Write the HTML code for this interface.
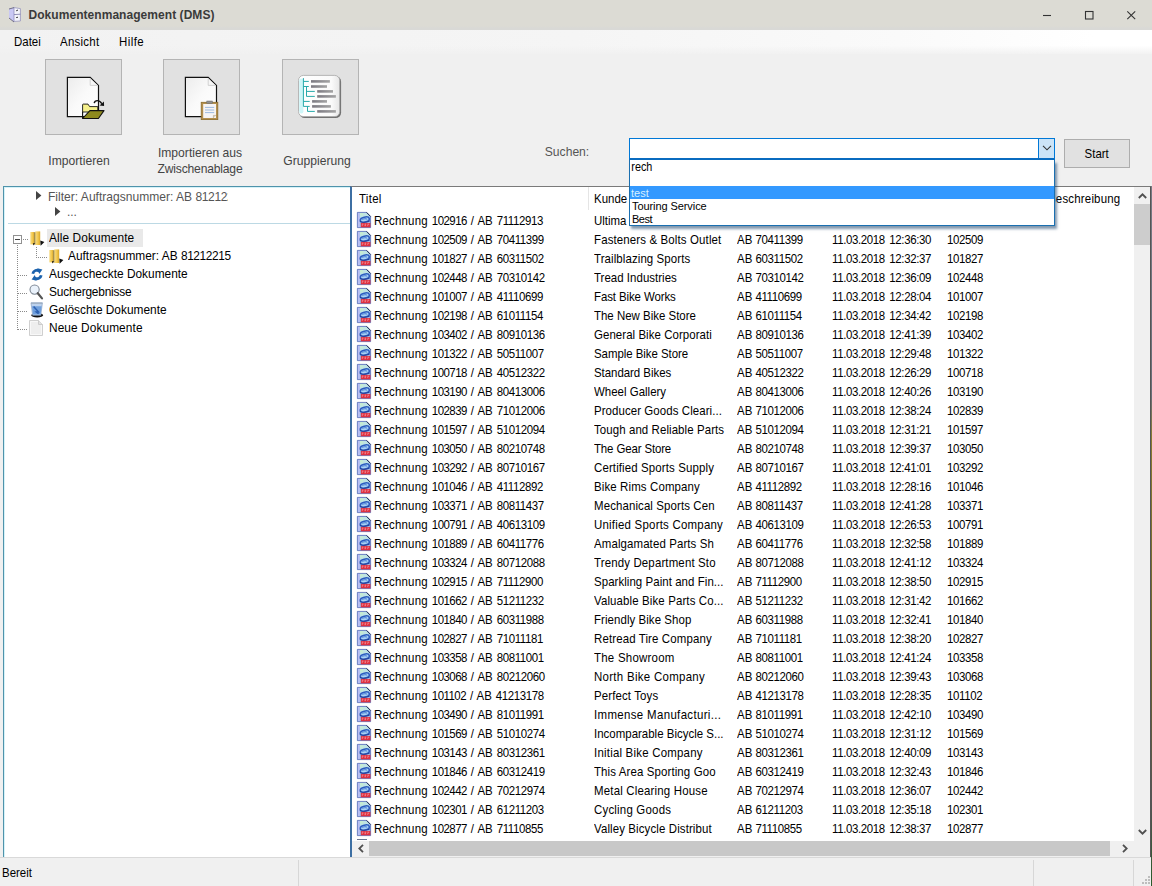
<!DOCTYPE html>
<html lang="de">
<head>
<meta charset="utf-8">
<title>Dokumentenmanagement (DMS)</title>
<style>
*{box-sizing:border-box;margin:0;padding:0}
html,body{width:1152px;height:886px;overflow:hidden;background:#f0f0f0}
body{font-family:"Liberation Sans",sans-serif;font-size:12px;color:#000;position:relative}
.abs,.r,.c,.t,.lbl,.mi{position:absolute;white-space:nowrap}
svg{position:absolute;overflow:visible}
/* title bar */
#title{left:0;top:0;width:1152px;height:30px;background:linear-gradient(180deg,#dcdbd4 0,#dcdbd4 86%,#d9d9d6 94%,#d9d9d6 100%)}
#title .tt{left:28.5px;top:7px;font-weight:bold;font-size:12px;line-height:16px;color:#3a3a3a;letter-spacing:.05px}
/* menu */
#menu{left:0;top:30px;width:1152px;height:24px;background:linear-gradient(180deg,rgba(240,240,240,0) 65%,rgba(240,240,240,.85) 100%),linear-gradient(90deg,#f2f2f2 0,#f5f5f5 50%,#fafafa 78%,#fff 95%)}
.mi{top:4px;line-height:16px}
/* toolbar */
.tb{width:77px;height:76px;top:59px;background:#e1e1e1;border:1px solid #b4b4b4}
.lbl{color:#444;line-height:14.5px;text-align:center;transform:translateX(-50%) scale(1.01,1.05)}
#combo{left:629px;top:138px;width:426px;height:22px;background:#fff;border:1px solid #0078d7;border-bottom:2px solid #0a6cc0}
#cbtn{left:1038px;top:139px;width:16px;height:19px;background:#cce4f7;border-left:1px solid #0078d7}
#drop{left:629px;top:160px;width:426px;height:66px;background:#fff;border:1px solid #1a6fb0;border-top:none;box-shadow:2px 3px 2.5px rgba(30,70,110,.55)}
#drop div{position:absolute;left:0;width:424px;height:13px;line-height:15px;font-size:11px;padding-left:2px}
#start{left:1064px;top:139px;width:66px;height:29px;background:#e1e1e1;border:1px solid #adadad;text-align:center;line-height:29px}
/* panels */
#left{left:3px;top:186px;width:347px;height:671px;background:#fff;border-left:1px solid #4f93ab;border-top:1px solid #4f93ab}
#right{left:350px;top:186px;width:801px;height:671px;background:#fff;border-left:2px solid #3d6fa3;border-top:1px solid #7a7a7a;border-right:1px solid #555}
.t{line-height:18px}
.c,.t,.h,.mi,.sx{transform:scale(.955,1.05);transform-origin:0 60%}
.t{transform:scale(.99,1.05)}
.t b,.c b{font-weight:normal;letter-spacing:-.39px}
.c i{font-style:normal;letter-spacing:.2px}
.c1{word-spacing:.85px}
.c4{word-spacing:1.4px}
.c b.n6{letter-spacing:-.55px}
.dot{position:absolute;background-image:linear-gradient(90deg,#8a8a8a 50%,transparent 50%);background-size:2px 1px;height:1px}
.vdot{position:absolute;background-image:linear-gradient(180deg,#8a8a8a 50%,transparent 50%);background-size:1px 2px;width:1px}
/* list */
.r{left:0;width:1134px;height:19px;line-height:19px}
.c{top:1px}
.c1{left:374.4px}.c2{left:594px}.c3{left:737px}.c4{left:832px}.c5{left:947px}
.pi{left:357px;top:1px;width:14px;height:16px}
.h{top:191px;line-height:16px}
/* scrollbars */
#vs{left:1134px;top:187px;width:16px;height:654px;background:#f0f0f0}
#hs{left:352px;top:841px;width:798px;height:16px;background:#f0f0f0}
/* status */
#status{left:0;top:857px;width:1151px;height:29px;background:#f0f0f0;border-top:1px solid #d9d9d9}
.sep{position:absolute;top:2px;width:1px;height:27px;background:#d7d7d7}
</style>
</head>
<body>
<svg width="0" height="0" style="position:absolute">
<defs>
<linearGradient id="pg" x1="0" y1="0" x2="1" y2="1"><stop offset="0" stop-color="#ececec"/><stop offset=".5" stop-color="#fafafa"/><stop offset="1" stop-color="#fff"/></linearGradient>
<linearGradient id="fy" x1="0" y1="0" x2="1" y2="0"><stop offset="0" stop-color="#f7dc86"/><stop offset=".55" stop-color="#f3c94e"/><stop offset="1" stop-color="#d9a62a"/></linearGradient>
<g id="pdf">
<path d="M0.4 0.4H9.6L13.6 4.5V15.6H0.4Z" fill="#9fc0ee" stroke="#4f66b2" stroke-width=".8"/>
<path d="M0.9 0.9H2.7V15.1H0.9Z" fill="#b9bdf2"/>
<path d="M2.9 1H9.2L12 3.9V5.4H2.9Z" fill="#bfe4e2"/>
<path d="M3 1.2H6V3.4H3Z" fill="#c6ecd0"/>
<ellipse cx="7.8" cy="7.6" rx="4.6" ry="2.5" transform="rotate(-14 7.8 7.6)" fill="#a9d2f4" stroke="#2c5cc0" stroke-width="1.5"/>
<path d="M2.8 9.4C5 10.6 8.4 10.8 12.8 9" fill="none" stroke="#1f3f98" stroke-width="1"/>
<path d="M5.4 7.6C6.6 6.6 8.8 6.4 10.2 7.2" fill="none" stroke="#3a70d0" stroke-width=".9"/>
<path d="M9.6 0.4L13.6 4.5" stroke="#20304e" stroke-width="1"/>
<rect x="3.8" y="10.9" width="9.6" height="4.4" fill="#de2f3f"/>
<path d="M4.8 12.2H6.4M7.6 12.2H9.2M10.4 12.2H12.2M4.8 13.6H5.6M7.6 13.6H8.8M10.4 13.6H11.2" stroke="#f5a0a8" stroke-width=".9"/>
</g>
<g id="fold">
<path d="M0.3 1H4.4V13.4H0.3Z" fill="url(#fy)"/>
<path d="M5.2 0.4H10.2V14H5.2Z" fill="url(#fy)"/>
<path d="M4.3 1.2H5.3V13.6H4.3Z" fill="#8a7320"/>
<path d="M2.9 12.2H5.1L3.4 14.6Z" fill="#111"/>
<path d="M10.3 9.4L14.4 11L10.6 14.8Z" fill="#111"/>
</g>
</defs>
</svg>

<!-- ===== title bar ===== -->
<div id="title" class="abs">
<svg style="left:8px;top:7px" width="14" height="17" viewBox="0 0 14 17"><path d="M1 2L6 0.6V14.4L1 11Z" fill="#c9c8f4"/><path d="M6 0.6L12.4 1.6V14L6 14.4Z" fill="#f4f4fb" stroke="#8a88b4" stroke-width=".7"/><path d="M1 2L6 0.6M1 11L6 15" stroke="#55546e" stroke-width=".8"/><path d="M6 7.6L12.4 7.2" stroke="#7a78a8" stroke-width=".8"/><path d="M8.2 3.8L10 3M8.2 10.6L10 10.2" stroke="#333" stroke-width="1"/></svg>
<div class="abs tt">Dokumentenmanagement (DMS)</div>
<svg style="left:1042px;top:10px" width="100" height="12" viewBox="0 0 100 12" fill="none" stroke="#333" stroke-width="1.1"><path d="M1 5.5H9"/><rect x="43.5" y="1.5" width="7.5" height="7.5"/><path d="M85.3 1.3L93.2 9.2M93.2 1.3L85.3 9.2"/></svg>
</div>

<!-- ===== menu ===== -->
<div id="menu" class="abs">
<div class="mi" style="left:14px">Datei</div>
<div class="mi" style="left:60px;letter-spacing:.28px">Ansicht</div>
<div class="mi" style="left:119px;letter-spacing:.45px">Hilfe</div>
</div>

<!-- ===== toolbar ===== -->
<div class="abs tb" style="left:45px"></div>
<div class="abs tb" style="left:163px"></div>
<div class="abs tb" style="left:282px"></div>

<!-- import icon -->
<svg style="left:66px;top:76px" width="40" height="44" viewBox="0 0 40 44">
<path d="M1.4 1.4H24.2L32.5 9.4V40.6H1.4Z" fill="url(#pg)" stroke="#111" stroke-width="1.2"/>
<path d="M24.2 2.4V9.4H31.6" fill="#f6f6f6" stroke="#cdcdcd" stroke-width=".9"/>
<path d="M16.6 42.4V28.7Q16.6 28.1 17.2 28.1H22L23.6 30.6H31.8V36H16.6Z" fill="#f5f08c" stroke="#111" stroke-width=".9"/>
<path d="M16.6 42.5L23.9 34.6H38L32.4 42.5Z" fill="#8e8a1e" stroke="#111" stroke-width="1.1" stroke-linejoin="round"/>
<path d="M28.2 27.2C28.8 24 33.6 23.4 35.8 27.8" fill="none" stroke="#111" stroke-width="1.4"/>
<path d="M33.6 29.6L38.1 29.9L37.9 25.6Z" fill="#111"/>
</svg>
<!-- clipboard icon -->
<svg style="left:184px;top:76px" width="40" height="44" viewBox="0 0 40 44">
<path d="M1.4 1.4H24.2L32.5 9.4V40.6H1.4Z" fill="url(#pg)" stroke="#111" stroke-width="1.2"/>
<path d="M24.2 2.4V9.4H31.6" fill="#f6f6f6" stroke="#cdcdcd" stroke-width=".9"/>
<rect x="17.2" y="26.3" width="16.6" height="17.3" fill="#b4904e" stroke="#8a6c2c" stroke-width=".8"/>
<rect x="19.2" y="28" width="12.8" height="14" fill="#f6f4f4"/>
<path d="M29.4 42V39.4H32" fill="#d8d0c4" stroke="#a89878" stroke-width=".5"/>
<rect x="22.8" y="25" width="5.6" height="2.6" fill="#8f8f8f" stroke="#6a6a6a" stroke-width=".5"/>
<path d="M21 31.4H30.2M21 34H30.2M21 36.6H30.2" stroke="#9dbbe0" stroke-width="1"/>
</svg>
<!-- grouping icon -->
<svg style="left:298px;top:75px" width="44" height="44" viewBox="0 0 44 44">
<defs><linearGradient id="bar" x1="0" y1="0" x2="1" y2="0"><stop offset="0" stop-color="#7c7a82"/><stop offset="1" stop-color="#a4a4a4"/></linearGradient>
<linearGradient id="gi" x1="0" y1="0" x2="1" y2="0"><stop offset="0" stop-color="#fff"/><stop offset=".8" stop-color="#fafafa"/><stop offset="1" stop-color="#e6e6e6"/></linearGradient></defs>
<rect x="1.3" y="1.2" width="41.8" height="41.8" rx="5.5" fill="#6e6e6e"/>
<rect x=".5" y=".4" width="41.2" height="41.2" rx="5" fill="url(#gi)" stroke="#a8a8a8" stroke-width=".8"/>
<rect x="1.2" y="3.4" width="4.2" height="35" rx="2" fill="#cff6f8"/>
<path d="M5.4 3.1V31.4H11.7M5.4 6.4H10.8M5.4 11.5H10.8M8.5 11.5V21.4H16.8M8.5 16.4H16.8M5.4 26.4H11.7M9.5 31.4V36.4H16.8" fill="none" stroke="#27a9ab" stroke-width="1"/>
<g fill="url(#bar)"><rect x="13" y="5.1" width="18.9" height="2.6"/><rect x="13" y="10.2" width="16" height="2.6"/><rect x="19.2" y="15.1" width="15.8" height="2.6"/><rect x="19.2" y="20.1" width="18.7" height="2.6"/><rect x="14.1" y="25.1" width="14.9" height="2.6"/><rect x="14.1" y="30.1" width="18.8" height="2.6"/><rect x="19.2" y="35.1" width="18.7" height="2.6"/></g>
</svg>

<div class="lbl" style="left:79px;top:154px">Importieren</div>
<div class="lbl" style="left:200px;top:146px">Importieren aus<br><span style="letter-spacing:-.19px">Zwischenablage</span></div>
<div class="lbl" style="left:317px;top:154px">Gruppierung</div>
<div class="lbl" style="left:567px;top:145px;color:#555">Suchen:</div>

<div id="combo" class="abs"></div>
<div id="cbtn" class="abs"><svg style="left:3px;top:6px" width="10" height="6" viewBox="0 0 10 6"><path d="M1 .8L5 4.8L9 .8" fill="none" stroke="#333" stroke-width="1.1"/></svg></div>
<div id="start" class="abs"><span class="sx" style="display:inline-block;transform-origin:50% 60%">Start</span></div>

<!-- ===== left panel ===== -->
<div id="left" class="abs"></div>
<div class="abs" style="left:4px;top:187px;width:346px;height:1px;background:#d6f2f8"></div>
<div class="abs" style="left:4px;top:187px;width:1px;height:670px;background:#d6f2f8"></div>
<div class="abs" style="left:8px;top:223px;width:342px;height:1px;background:#bcd9e4"></div>
<svg style="left:36px;top:191px" width="6" height="9" viewBox="0 0 6 9"><path d="M0 0L5.4 4.5L0 9Z" fill="#444"/></svg>
<svg style="left:55px;top:207px" width="6" height="9" viewBox="0 0 6 9"><path d="M0 0L5.4 4.5L0 9Z" fill="#444"/></svg>
<div class="t" style="left:48px;top:188px;color:#555;width:178.5px;overflow:hidden;transform:scale(1.005,1.05)">Filter: Auftragsnummer: AB <b>812122</b></div>
<div class="t" style="left:67px;top:203px;color:#555">...</div>

<!-- tree -->
<div class="abs" style="left:47px;top:229px;width:96px;height:18px;background:#e9e9e9"></div>
<div class="vdot" style="left:17px;top:245px;height:85px"></div>
<div class="dot" style="left:23px;top:239px;width:6px"></div>
<div class="vdot" style="left:36px;top:247px;height:11px"></div>
<div class="dot" style="left:36px;top:257px;width:11px"></div>
<div class="dot" style="left:18px;top:275px;width:10px"></div>
<div class="dot" style="left:18px;top:293px;width:10px"></div>
<div class="dot" style="left:18px;top:311px;width:10px"></div>
<div class="dot" style="left:18px;top:329px;width:10px"></div>
<div class="abs" style="left:13px;top:235px;width:9px;height:9px;border:1px solid #919191;background:#fff"></div>
<div class="abs" style="left:15px;top:239px;width:5px;height:1px;background:#444"></div>

<svg style="left:29.5px;top:231px" width="15" height="15" viewBox="0 0 15 15"><use href="#fold"/></svg>
<svg style="left:48.5px;top:249px" width="15" height="15" viewBox="0 0 15 15"><use href="#fold"/></svg>
<!-- refresh -->
<svg style="left:30.5px;top:268px" width="12" height="13" viewBox="0 0 12 13"><path d="M1.8 5.8A4.2 4.2 0 0 1 8.6 3.2" fill="none" stroke="#1c62ad" stroke-width="2.8"/><path d="M6.4 0.2L11.4 1.6L8.2 6Z" fill="#1c62ad"/><path d="M10.2 7.2A4.2 4.2 0 0 1 3.4 9.8" fill="none" stroke="#1c62ad" stroke-width="2.8"/><path d="M5.6 12.8L0.6 11.4L3.8 7Z" fill="#1c62ad"/></svg>
<!-- magnifier -->
<svg style="left:29px;top:284px" width="15" height="16" viewBox="0 0 15 16"><circle cx="5.6" cy="5.6" r="4.6" fill="#eaf2fb" stroke="#7d8794" stroke-width="1.1"/><path d="M8.8 9.2L13 14.4" stroke="#555" stroke-width="2.2" stroke-linecap="round"/></svg>
<!-- trash -->
<svg style="left:29.5px;top:302px" width="14" height="16" viewBox="0 0 14 16"><ellipse cx="7.2" cy="13.2" rx="6" ry="2.2" fill="#111"/><path d="M1 0.8H12.4L10.8 13.2H2.6Z" fill="#bcd2ee" stroke="#8aa2c4" stroke-width=".7"/><path d="M2 4.2H11.6L10.6 12.6H3Z" fill="#6f9fdc"/><path d="M3.6 4.6L8.4 9.8L6.4 10L8.6 11.6" fill="none" stroke="#2b5fb0" stroke-width="1.5"/><path d="M1 1.2H12.4" stroke="#9aa8b8" stroke-width="1"/></svg>
<!-- page -->
<svg style="left:29px;top:320px" width="14" height="16" viewBox="0 0 14 16"><path d="M0.5 0.5H9.5L13.5 4.5V15.5H0.5Z" fill="#eeeeee" stroke="#cfcfcf" stroke-width="1"/><path d="M1.5 1.5H9L12.5 5V14.5H1.5Z" fill="none" stroke="#f8f8f8" stroke-width="1"/><path d="M9.5 0.5V4.5H13.5" fill="#e2e2e2" stroke="#c4c4c4" stroke-width=".8"/></svg>

<div class="t" style="left:49px;top:229px;letter-spacing:.1px">Alle Dokumente</div>
<div class="t" style="left:68px;top:247px">Auftragsnummer: AB <b>81212215</b></div>
<div class="t" style="left:49px;top:265px">Ausgecheckte Dokumente</div>
<div class="t" style="left:49px;top:283px;letter-spacing:-.2px">Suchergebnisse</div>
<div class="t" style="left:49px;top:301px">Gelöschte Dokumente</div>
<div class="t" style="left:49px;top:319px;letter-spacing:.08px">Neue Dokumente</div>

<!-- ===== right panel ===== -->
<div id="right" class="abs"></div>
<div class="abs" style="left:588px;top:187px;width:1px;height:23px;background:#e5e5e5"></div>
<div class="abs h" style="left:359px;letter-spacing:.3px">Titel</div>
<div class="abs h" style="left:594px">Kunde</div>
<div class="abs h" style="left:1047.6px;letter-spacing:.2px">Beschreibung</div>
<div class="r" style="top:211px"><svg class="pi" viewBox="0 0 14 16"><use href="#pdf"/></svg><span class="c c1"><i>Rechnung</i> <b class="n6">102916</b> / AB <b>71112913</b></span><span class="c c2">Ultima</span></div>
<div class="r" style="top:230px"><svg class="pi" viewBox="0 0 14 16"><use href="#pdf"/></svg><span class="c c1"><i>Rechnung</i> <b class="n6">102509</b> / AB <b>70411399</b></span><span class="c c2" style="letter-spacing:0.14px">Fasteners &amp; Bolts Outlet</span><span class="c c3">AB <b>70411399</b></span><span class="c c4"><b>11.03.2018</b> <b>12:36:30</b></span><span class="c c5"><b>102509</b></span></div>
<div class="r" style="top:249px"><svg class="pi" viewBox="0 0 14 16"><use href="#pdf"/></svg><span class="c c1"><i>Rechnung</i> <b class="n6">101827</b> / AB <b>60311502</b></span><span class="c c2" style="letter-spacing:0.1px">Trailblazing Sports</span><span class="c c3">AB <b>60311502</b></span><span class="c c4"><b>11.03.2018</b> <b>12:32:37</b></span><span class="c c5"><b>101827</b></span></div>
<div class="r" style="top:268px"><svg class="pi" viewBox="0 0 14 16"><use href="#pdf"/></svg><span class="c c1"><i>Rechnung</i> <b class="n6">102448</b> / AB <b>70310142</b></span><span class="c c2" style="letter-spacing:0.03px">Tread Industries</span><span class="c c3">AB <b>70310142</b></span><span class="c c4"><b>11.03.2018</b> <b>12:36:09</b></span><span class="c c5"><b>102448</b></span></div>
<div class="r" style="top:287px"><svg class="pi" viewBox="0 0 14 16"><use href="#pdf"/></svg><span class="c c1"><i>Rechnung</i> <b class="n6">101007</b> / AB <b>41110699</b></span><span class="c c2" style="letter-spacing:-0.11px">Fast Bike Works</span><span class="c c3">AB <b>41110699</b></span><span class="c c4"><b>11.03.2018</b> <b>12:28:04</b></span><span class="c c5"><b>101007</b></span></div>
<div class="r" style="top:306px"><svg class="pi" viewBox="0 0 14 16"><use href="#pdf"/></svg><span class="c c1"><i>Rechnung</i> <b class="n6">102198</b> / AB <b>61011154</b></span><span class="c c2">The New Bike Store</span><span class="c c3">AB <b>61011154</b></span><span class="c c4"><b>11.03.2018</b> <b>12:34:42</b></span><span class="c c5"><b>102198</b></span></div>
<div class="r" style="top:325px"><svg class="pi" viewBox="0 0 14 16"><use href="#pdf"/></svg><span class="c c1"><i>Rechnung</i> <b class="n6">103402</b> / AB <b>80910136</b></span><span class="c c2" style="letter-spacing:0.06px">General Bike Corporati</span><span class="c c3">AB <b>80910136</b></span><span class="c c4"><b>11.03.2018</b> <b>12:41:39</b></span><span class="c c5"><b>103402</b></span></div>
<div class="r" style="top:344px"><svg class="pi" viewBox="0 0 14 16"><use href="#pdf"/></svg><span class="c c1"><i>Rechnung</i> <b class="n6">101322</b> / AB <b>50511007</b></span><span class="c c2" style="letter-spacing:-0.05px">Sample Bike Store</span><span class="c c3">AB <b>50511007</b></span><span class="c c4"><b>11.03.2018</b> <b>12:29:48</b></span><span class="c c5"><b>101322</b></span></div>
<div class="r" style="top:363px"><svg class="pi" viewBox="0 0 14 16"><use href="#pdf"/></svg><span class="c c1"><i>Rechnung</i> <b class="n6">100718</b> / AB <b>40512322</b></span><span class="c c2" style="letter-spacing:-0.04px">Standard Bikes</span><span class="c c3">AB <b>40512322</b></span><span class="c c4"><b>11.03.2018</b> <b>12:26:29</b></span><span class="c c5"><b>100718</b></span></div>
<div class="r" style="top:382px"><svg class="pi" viewBox="0 0 14 16"><use href="#pdf"/></svg><span class="c c1"><i>Rechnung</i> <b class="n6">103190</b> / AB <b>80413006</b></span><span class="c c2" style="letter-spacing:0.01px">Wheel Gallery</span><span class="c c3">AB <b>80413006</b></span><span class="c c4"><b>11.03.2018</b> <b>12:40:26</b></span><span class="c c5"><b>103190</b></span></div>
<div class="r" style="top:401px"><svg class="pi" viewBox="0 0 14 16"><use href="#pdf"/></svg><span class="c c1"><i>Rechnung</i> <b class="n6">102839</b> / AB <b>71012006</b></span><span class="c c2" style="letter-spacing:0.08px">Producer Goods Cleari...</span><span class="c c3">AB <b>71012006</b></span><span class="c c4"><b>11.03.2018</b> <b>12:38:24</b></span><span class="c c5"><b>102839</b></span></div>
<div class="r" style="top:420px"><svg class="pi" viewBox="0 0 14 16"><use href="#pdf"/></svg><span class="c c1"><i>Rechnung</i> <b class="n6">101597</b> / AB <b>51012094</b></span><span class="c c2" style="letter-spacing:0.09px">Tough and Reliable Parts</span><span class="c c3">AB <b>51012094</b></span><span class="c c4"><b>11.03.2018</b> <b>12:31:21</b></span><span class="c c5"><b>101597</b></span></div>
<div class="r" style="top:439px"><svg class="pi" viewBox="0 0 14 16"><use href="#pdf"/></svg><span class="c c1"><i>Rechnung</i> <b class="n6">103050</b> / AB <b>80210748</b></span><span class="c c2" style="letter-spacing:-0.14px">The Gear Store</span><span class="c c3">AB <b>80210748</b></span><span class="c c4"><b>11.03.2018</b> <b>12:39:37</b></span><span class="c c5"><b>103050</b></span></div>
<div class="r" style="top:458px"><svg class="pi" viewBox="0 0 14 16"><use href="#pdf"/></svg><span class="c c1"><i>Rechnung</i> <b class="n6">103292</b> / AB <b>80710167</b></span><span class="c c2" style="letter-spacing:0.13px">Certified Sports Supply</span><span class="c c3">AB <b>80710167</b></span><span class="c c4"><b>11.03.2018</b> <b>12:41:01</b></span><span class="c c5"><b>103292</b></span></div>
<div class="r" style="top:477px"><svg class="pi" viewBox="0 0 14 16"><use href="#pdf"/></svg><span class="c c1"><i>Rechnung</i> <b class="n6">101046</b> / AB <b>41112892</b></span><span class="c c2" style="letter-spacing:0.13px">Bike Rims Company</span><span class="c c3">AB <b>41112892</b></span><span class="c c4"><b>11.03.2018</b> <b>12:28:16</b></span><span class="c c5"><b>101046</b></span></div>
<div class="r" style="top:496px"><svg class="pi" viewBox="0 0 14 16"><use href="#pdf"/></svg><span class="c c1"><i>Rechnung</i> <b class="n6">103371</b> / AB <b>80811437</b></span><span class="c c2" style="letter-spacing:0.11px">Mechanical Sports Cen</span><span class="c c3">AB <b>80811437</b></span><span class="c c4"><b>11.03.2018</b> <b>12:41:28</b></span><span class="c c5"><b>103371</b></span></div>
<div class="r" style="top:515px"><svg class="pi" viewBox="0 0 14 16"><use href="#pdf"/></svg><span class="c c1"><i>Rechnung</i> <b class="n6">100791</b> / AB <b>40613109</b></span><span class="c c2" style="letter-spacing:0.23px">Unified Sports Company</span><span class="c c3">AB <b>40613109</b></span><span class="c c4"><b>11.03.2018</b> <b>12:26:53</b></span><span class="c c5"><b>100791</b></span></div>
<div class="r" style="top:534px"><svg class="pi" viewBox="0 0 14 16"><use href="#pdf"/></svg><span class="c c1"><i>Rechnung</i> <b class="n6">101889</b> / AB <b>60411776</b></span><span class="c c2" style="letter-spacing:0.11px">Amalgamated Parts Sh</span><span class="c c3">AB <b>60411776</b></span><span class="c c4"><b>11.03.2018</b> <b>12:32:58</b></span><span class="c c5"><b>101889</b></span></div>
<div class="r" style="top:553px"><svg class="pi" viewBox="0 0 14 16"><use href="#pdf"/></svg><span class="c c1"><i>Rechnung</i> <b class="n6">103324</b> / AB <b>80712088</b></span><span class="c c2" style="letter-spacing:0.15px">Trendy Department Sto</span><span class="c c3">AB <b>80712088</b></span><span class="c c4"><b>11.03.2018</b> <b>12:41:12</b></span><span class="c c5"><b>103324</b></span></div>
<div class="r" style="top:572px"><svg class="pi" viewBox="0 0 14 16"><use href="#pdf"/></svg><span class="c c1"><i>Rechnung</i> <b class="n6">102915</b> / AB <b>71112900</b></span><span class="c c2" style="letter-spacing:0.06px">Sparkling Paint and Fin...</span><span class="c c3">AB <b>71112900</b></span><span class="c c4"><b>11.03.2018</b> <b>12:38:50</b></span><span class="c c5"><b>102915</b></span></div>
<div class="r" style="top:591px"><svg class="pi" viewBox="0 0 14 16"><use href="#pdf"/></svg><span class="c c1"><i>Rechnung</i> <b class="n6">101662</b> / AB <b>51211232</b></span><span class="c c2" style="letter-spacing:0.13px">Valuable Bike Parts Co...</span><span class="c c3">AB <b>51211232</b></span><span class="c c4"><b>11.03.2018</b> <b>12:31:42</b></span><span class="c c5"><b>101662</b></span></div>
<div class="r" style="top:610px"><svg class="pi" viewBox="0 0 14 16"><use href="#pdf"/></svg><span class="c c1"><i>Rechnung</i> <b class="n6">101840</b> / AB <b>60311988</b></span><span class="c c2" style="letter-spacing:0.07px">Friendly Bike Shop</span><span class="c c3">AB <b>60311988</b></span><span class="c c4"><b>11.03.2018</b> <b>12:32:41</b></span><span class="c c5"><b>101840</b></span></div>
<div class="r" style="top:629px"><svg class="pi" viewBox="0 0 14 16"><use href="#pdf"/></svg><span class="c c1"><i>Rechnung</i> <b class="n6">102827</b> / AB <b>71011181</b></span><span class="c c2" style="letter-spacing:0.13px">Retread Tire Company</span><span class="c c3">AB <b>71011181</b></span><span class="c c4"><b>11.03.2018</b> <b>12:38:20</b></span><span class="c c5"><b>102827</b></span></div>
<div class="r" style="top:648px"><svg class="pi" viewBox="0 0 14 16"><use href="#pdf"/></svg><span class="c c1"><i>Rechnung</i> <b class="n6">103358</b> / AB <b>80811001</b></span><span class="c c2" style="letter-spacing:0.25px">The Showroom</span><span class="c c3">AB <b>80811001</b></span><span class="c c4"><b>11.03.2018</b> <b>12:41:24</b></span><span class="c c5"><b>103358</b></span></div>
<div class="r" style="top:667px"><svg class="pi" viewBox="0 0 14 16"><use href="#pdf"/></svg><span class="c c1"><i>Rechnung</i> <b class="n6">103068</b> / AB <b>80212060</b></span><span class="c c2" style="letter-spacing:0.31px">North Bike Company</span><span class="c c3">AB <b>80212060</b></span><span class="c c4"><b>11.03.2018</b> <b>12:39:43</b></span><span class="c c5"><b>103068</b></span></div>
<div class="r" style="top:686px"><svg class="pi" viewBox="0 0 14 16"><use href="#pdf"/></svg><span class="c c1"><i>Rechnung</i> <b class="n6">101102</b> / AB <b>41213178</b></span><span class="c c2" style="letter-spacing:0.12px">Perfect Toys</span><span class="c c3">AB <b>41213178</b></span><span class="c c4"><b>11.03.2018</b> <b>12:28:35</b></span><span class="c c5"><b>101102</b></span></div>
<div class="r" style="top:705px"><svg class="pi" viewBox="0 0 14 16"><use href="#pdf"/></svg><span class="c c1"><i>Rechnung</i> <b class="n6">103490</b> / AB <b>81011991</b></span><span class="c c2" style="letter-spacing:0.36px">Immense Manufacturi...</span><span class="c c3">AB <b>81011991</b></span><span class="c c4"><b>11.03.2018</b> <b>12:42:10</b></span><span class="c c5"><b>103490</b></span></div>
<div class="r" style="top:724px"><svg class="pi" viewBox="0 0 14 16"><use href="#pdf"/></svg><span class="c c1"><i>Rechnung</i> <b class="n6">101569</b> / AB <b>51010274</b></span><span class="c c2" style="letter-spacing:0.01px">Incomparable Bicycle S...</span><span class="c c3">AB <b>51010274</b></span><span class="c c4"><b>11.03.2018</b> <b>12:31:12</b></span><span class="c c5"><b>101569</b></span></div>
<div class="r" style="top:743px"><svg class="pi" viewBox="0 0 14 16"><use href="#pdf"/></svg><span class="c c1"><i>Rechnung</i> <b class="n6">103143</b> / AB <b>80312361</b></span><span class="c c2" style="letter-spacing:0.22px">Initial Bike Company</span><span class="c c3">AB <b>80312361</b></span><span class="c c4"><b>11.03.2018</b> <b>12:40:09</b></span><span class="c c5"><b>103143</b></span></div>
<div class="r" style="top:762px"><svg class="pi" viewBox="0 0 14 16"><use href="#pdf"/></svg><span class="c c1"><i>Rechnung</i> <b class="n6">101846</b> / AB <b>60312419</b></span><span class="c c2" style="letter-spacing:0.12px">This Area Sporting Goo</span><span class="c c3">AB <b>60312419</b></span><span class="c c4"><b>11.03.2018</b> <b>12:32:43</b></span><span class="c c5"><b>101846</b></span></div>
<div class="r" style="top:781px"><svg class="pi" viewBox="0 0 14 16"><use href="#pdf"/></svg><span class="c c1"><i>Rechnung</i> <b class="n6">102442</b> / AB <b>70212974</b></span><span class="c c2" style="letter-spacing:0.19px">Metal Clearing House</span><span class="c c3">AB <b>70212974</b></span><span class="c c4"><b>11.03.2018</b> <b>12:36:07</b></span><span class="c c5"><b>102442</b></span></div>
<div class="r" style="top:800px"><svg class="pi" viewBox="0 0 14 16"><use href="#pdf"/></svg><span class="c c1"><i>Rechnung</i> <b class="n6">102301</b> / AB <b>61211203</b></span><span class="c c2" style="letter-spacing:0.21px">Cycling Goods</span><span class="c c3">AB <b>61211203</b></span><span class="c c4"><b>11.03.2018</b> <b>12:35:18</b></span><span class="c c5"><b>102301</b></span></div>
<div class="r" style="top:819px"><svg class="pi" viewBox="0 0 14 16"><use href="#pdf"/></svg><span class="c c1"><i>Rechnung</i> <b class="n6">102877</b> / AB <b>71110855</b></span><span class="c c2" style="letter-spacing:0.12px">Valley Bicycle Distribut</span><span class="c c3">AB <b>71110855</b></span><span class="c c4"><b>11.03.2018</b> <b>12:38:37</b></span><span class="c c5"><b>102877</b></span></div>
<div class="abs" style="left:357px;top:839px;width:10px;height:1px;background:#6b7690"></div>

<!-- scrollbars -->
<div id="vs" class="abs">
<div class="abs" style="left:0;top:17px;width:16px;height:41px;background:#cdcdcd"></div>
<svg style="left:3.5px;top:6px" width="9" height="6" viewBox="0 0 9 6"><path d="M.8 5L4.5 1.3L8.2 5" fill="none" stroke="#505050" stroke-width="1.8"/></svg>
<svg style="left:3.5px;top:641.5px" width="9" height="6" viewBox="0 0 9 6"><path d="M.8 1L4.5 4.7L8.2 1" fill="none" stroke="#505050" stroke-width="1.8"/></svg>
</div>
<div id="hs" class="abs">
<div class="abs" style="left:17px;top:0;width:741px;height:15px;background:#c8c8c8"></div>
<svg style="left:6px;top:3px" width="6" height="9" viewBox="0 0 6 9"><path d="M5 .8L1.3 4.5L5 8.2" fill="none" stroke="#505050" stroke-width="1.8"/></svg>
<svg style="left:770px;top:3px" width="6" height="9" viewBox="0 0 6 9"><path d="M1 .8L4.7 4.5L1 8.2" fill="none" stroke="#505050" stroke-width="1.8"/></svg>
</div>

<!-- dropdown (on top) -->
<div id="drop" class="abs">
<div style="top:1px;font-size:12px;line-height:13px;padding-left:1.5px;transform:scaleX(.9);transform-origin:0 0">rech</div>
<div style="top:26px;background:#3399ff;color:#d8f0ff;padding-left:1px">test</div>
<div style="top:39px;letter-spacing:-.08px">Touring Service</div>
<div style="top:52px;letter-spacing:-.5px">Best</div>
</div>

<!-- ===== status ===== -->
<div id="status" class="abs">
<div class="abs sx" style="left:1.8px;top:7px;line-height:16px">Bereit</div>
<div class="sep" style="left:298px"></div>
<div class="sep" style="left:1033px"></div>
<div class="sep" style="left:1133px"></div>
<svg style="left:1141.5px;top:18px" width="8" height="8" viewBox="0 0 8 8" fill="#bdbdbd"><rect x="6" y="0" width="2" height="2"/><rect x="3" y="3" width="2" height="2"/><rect x="6" y="3" width="2" height="2"/><rect x="0" y="6" width="2" height="2"/><rect x="3" y="6" width="2" height="2"/><rect x="6" y="6" width="2" height="2"/></svg>
</div>
<!-- desktop strip at far right -->
<div class="abs" style="left:1151px;top:186px;width:1px;height:700px;background:linear-gradient(180deg,#777a84 0,#6a6e78 30%,#8a7a30 36%,#6a6030 70%,#555 88%,#2a5a2a 100%)"></div>
</body>
</html>
